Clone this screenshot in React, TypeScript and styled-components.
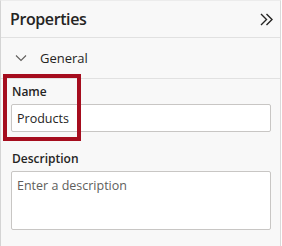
import styled, { createGlobalStyle } from "styled-components";

const GlobalStyle = createGlobalStyle`
  body {
    margin: 0;
    padding: 0;
    background: #ffffff;
  }
`;

const Panel = styled.div`
  position: relative;
  box-sizing: border-box;
  width: 281px;
  height: 246px;
  background-color: #f8f8f8;
  border-left: 1px solid #d4d4d4;
  border-right: 1px solid #dadada;
  border-top: 1px solid #ececec;
  font-family: "Open Sans", "Noto Sans", sans-serif;
  color: #252423;
`;

const Header = styled.div`
  display: flex;
  align-items: center;
  justify-content: space-between;
  height: 36px;
  padding: 0 6px 0 9px;
  border-bottom: 1px solid #e1e1e1;
`;

const Title = styled.h1`
  margin: 0;
  font-size: 16px;
  font-weight: 600;
  letter-spacing: -0.4px;
`;

const IconButton = styled.button`
  display: flex;
  align-items: center;
  justify-content: center;
  width: 16px;
  height: 16px;
  padding: 0;
  border: none;
  background: none;
  color: #252423;
`;

const SectionHeader = styled.div`
  display: flex;
  align-items: center;
  gap: 13px;
  height: 40px;
  padding: 0 14px;
  border-bottom: 1px solid #e1e1e1;
  font-size: 13px;
  color: #252423;
`;

const Body = styled.div`
  display: flex;
  flex-direction: column;
  padding: 3px 10px 0 10px;
`;

const Field = styled.div`
  display: flex;
  flex-direction: column;
  margin-bottom: 17px;
`;

const Label = styled.label`
  font-size: 12px;
  font-weight: 600;
  line-height: 16px;
  margin: 2px 0 4px 1px;
`;

const Input = styled.input`
  box-sizing: border-box;
  height: 28px;
  width: 260px;
  padding: 0 5px;
  border: 1px solid #c8c6c4;
  border-radius: 2px;
  background: #ffffff;
  font-family: inherit;
  font-size: 12.5px;
  color: #252423;
  outline: none;
`;

const TextArea = styled.textarea`
  box-sizing: border-box;
  height: 59px;
  width: 260px;
  padding: 5px 5px;
  border: 1px solid #c8c6c4;
  border-radius: 2px;
  background: #ffffff;
  font-family: inherit;
  font-size: 12.5px;
  color: #252423;
  resize: none;
  outline: none;

  &::placeholder {
    color: #605e5c;
    opacity: 1;
  }
`;

const Highlight = styled.div`
  position: absolute;
  left: 2px;
  top: 73px;
  width: 78px;
  height: 67px;
  box-sizing: border-box;
  border: 4px solid #a50d1e;
  pointer-events: none;
`;

const App = () => {
  return (
    <>
      <GlobalStyle />
      <Panel>
        <Header>
          <Title>Properties</Title>
          <IconButton>
            <svg width="13" height="13" viewBox="0 0 13 13" fill="none" stroke="currentColor" strokeWidth="1.4">
              <path d="M1 1 L6.5 6.5 L1 12" />
              <path d="M6.5 1 L12 6.5 L6.5 12" />
            </svg>
          </IconButton>
        </Header>
        <SectionHeader>
          <svg width="12" height="8" viewBox="0 0 12 8" fill="none" stroke="#605e5c" strokeWidth="1.1">
            <path d="M1 1.5 L6 6.5 L11 1.5" />
          </svg>
          <span>General</span>
        </SectionHeader>
        <Body>
          <Field>
            <Label>Name</Label>
            <Input defaultValue="Products" />
          </Field>
          <Field>
            <Label>Description</Label>
            <TextArea placeholder="Enter a description" />
          </Field>
        </Body>
        <Highlight />
      </Panel>
    </>
  );
};

export default App;
